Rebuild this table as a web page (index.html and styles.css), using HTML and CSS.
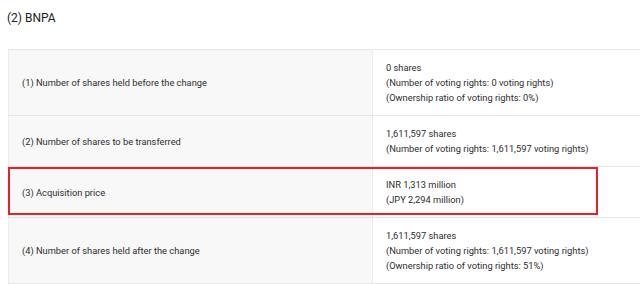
FILE: index.html
```html
<!DOCTYPE html>
<html>
<head>
<meta charset="utf-8">
<link rel="stylesheet" href="styles.css">
</head>
<body>
<h3 class="title">(2) BNPA</h3>
<div class="table-wrap">
  <table class="info">
    <colgroup><col class="c1"><col class="c2"></colgroup>
    <tr>
      <th>(1) Number of shares held before the change</th>
      <td>0 shares<br>(Number of voting rights: 0 voting rights)<br>(Ownership ratio of voting rights: 0%)</td>
    </tr>
    <tr>
      <th>(2) Number of shares to be transferred</th>
      <td>1,611,597 shares<br>(Number of voting rights: 1,611,597 voting rights)</td>
    </tr>
    <tr class="marked">
      <th>(3) Acquisition price</th>
      <td>INR 1,313 million<br>(JPY 2,294 million)</td>
    </tr>
    <tr>
      <th>(4) Number of shares held after the change</th>
      <td>1,611,597 shares<br>(Number of voting rights: 1,611,597 voting rights)<br>(Ownership ratio of voting rights: 51%)</td>
    </tr>
  </table>
  <div class="highlight"></div>
</div>
</body>
</html>
```
FILE: styles.css
```css
html, body {
  margin: 0;
  padding: 0;
  background: #fff;
}
body {
  font-family: Roboto, "Liberation Sans", sans-serif;
  color: #2e2e2e;
  overflow: hidden;
}
.title {
  margin: 0;
  padding: 10px 0 0 7px;
  font-size: 12px;
  font-weight: 400;
  line-height: 16px;
  color: #222;
}
.table-wrap {
  position: relative;
  margin: 23px 0 0 8px;
  width: 660px;
}
.info {
  border-collapse: collapse;
  table-layout: fixed;
  width: 100%;
  font-size: 9.3px;
  line-height: 15px;
}
.c1 { width: 364px; }
.info th, .info td {
  border-top: 1px solid #e6e6e6;
  border-bottom: 1px solid #e6e6e6;
  text-align: left;
  vertical-align: middle;
  font-weight: 400;
}
.info th {
  background: #f8f8f8;
  padding: 10px 13px;
  border-left: 1px solid #ececec;
  border-right: 1px solid #ececec;
}
.info td {
  padding: 10px 13px;
  background: #fff;
}
.highlight {
  position: absolute;
  left: 0;
  top: 118px;
  width: 586px;
  height: 44px;
  border: 2px solid #e8202a;
}
```
